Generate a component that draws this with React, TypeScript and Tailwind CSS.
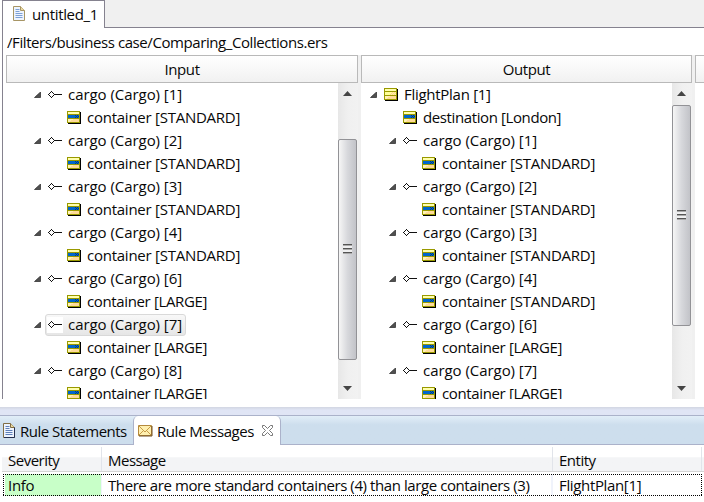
import type { ReactNode } from "react";

type Kind = "entity" | "association" | "attribute";
type Node = { kind: Kind; label: string; size: string; depth: number; selected?: boolean };

const cargo = (n: number, depth: number, selected = false): Node => ({
  kind: "association", label: `cargo (Cargo) [${n}]`, size: "tracking-[-0.05px]", depth, selected,
});
const container = (type: string, depth: number): Node => ({
  kind: "attribute",
  label: `container [${type}]`,
  size: type === "LARGE" ? "tracking-[-0.36px]" : "tracking-[-0.25px]",
  depth,
});

const inputNodes: Node[] = [
  cargo(1, 1), container("STANDARD", 2),
  cargo(2, 1), container("STANDARD", 2),
  cargo(3, 1), container("STANDARD", 2),
  cargo(4, 1), container("STANDARD", 2),
  cargo(6, 1), container("LARGE", 2),
  cargo(7, 1, true), container("LARGE", 2),
  cargo(8, 1), container("LARGE", 2),
];

const outputNodes: Node[] = [
  { kind: "entity", label: "FlightPlan [1]", size: "tracking-[-0.28px]", depth: 0 },
  { kind: "attribute", label: "destination [London]", size: "tracking-[-0.39px]", depth: 1 },
  cargo(1, 1), container("STANDARD", 2),
  cargo(2, 1), container("STANDARD", 2),
  cargo(3, 1), container("STANDARD", 2),
  cargo(4, 1), container("STANDARD", 2),
  cargo(6, 1), container("LARGE", 2),
  cargo(7, 1), container("LARGE", 2),
];

function NodeIcon({ kind }: { kind: Kind }) {
  if (kind === "association") {
    return (
      <svg width="16" height="13" viewBox="0 0 16 13" shapeRendering="crispEdges" className="shrink-0">
        <path d="M4 3h1v1h-1zM3 4h1v1h-1zM5 4h1v1h-1zM2 5h1v1h-1zM6 5h1v1h-1zM1 6h1v1h-1zM7 6h8v1h-8zM2 7h1v1h-1zM6 7h1v1h-1zM3 8h1v1h-1zM5 8h1v1h-1zM4 9h1v1h-1z" fill="#111" />
      </svg>
    );
  }
  const entity = kind === "entity";
  return (
    <svg width="16" height="13" viewBox="0 0 16 13" shapeRendering="crispEdges" className="shrink-0">
      <path d="M2 1h13v12H2z" fill="#000" />
      <path d="M1 0h13v12H1z" fill="#999900" />
      <path d="M2 1h11v2H2z" fill="#ffffad" />
      <path d="M2 4h11v3H2z" fill={entity ? "#ffff99" : "#0066cc"} />
      <path d="M2 8h11v3H2z" fill="#ffdb98" />
      <path d="M2 8h5v1H2zM2 9h3v1H2zM2 10h2v1H2z" fill="#fff3b5" />
      {entity ? (
        <path d="M9 4h1v1h-1zM11 4h1v1h-1zM8 5h1v1h-1zM10 5h1v1h-1zM12 5h1v1h-1zM7 6h1v1h-1zM9 6h1v1h-1zM11 6h1v1h-1z" fill="#ffcc99" />
      ) : (
        <path d="M9 4h1v1h-1zM11 4h1v1h-1zM10 5h1v1h-1zM12 5h1v1h-1zM9 6h1v1h-1zM11 6h1v1h-1z" fill="#003d82" />
      )}
    </svg>
  );
}

function TreeRow({ node }: { node: Node }) {
  const indent = node.depth === 0 ? "pl-[9px]" : node.depth === 1 ? "pl-[28px]" : "pl-[47px]";
  return (
    <div className={`flex h-[23px] shrink-0 items-center ${indent}`}>
      <span className="flex w-[11px] shrink-0">
        {node.kind !== "attribute" && (
          <svg width="7" height="6" viewBox="0 0 7 6">
            <path d="M6.5 0V5.5H0.5Z" fill="#505050" stroke="#262626" strokeWidth=".7" />
          </svg>
        )}
      </span>
      <div
        className={`flex h-[22px] items-center border pl-px ${
          node.selected
            ? "w-[141px] rounded-[3px] border-[#d9d9d9] bg-linear-to-b from-[#f8f8f8] to-[#e6e6e6]"
            : "border-transparent"
        }`}
      >
        <span className={`flex h-[16px] items-center ${node.selected ? "bg-white" : ""}`}>
          <NodeIcon kind={node.kind} />
        </span>
        <span className={`ml-[5px] pb-[2px] whitespace-nowrap ${node.size}`}>{node.label}</span>
      </div>
    </div>
  );
}

function Arrow({ down = false }: { down?: boolean }) {
  return (
    <svg width="9" height="5" viewBox="0 0 9 5" className={`ml-[5px] block ${down ? "rotate-180" : ""}`}>
      <path d="M4.5 0L9 5H0Z" fill="#454545" />
    </svg>
  );
}

function Scrollbar({ before, thumb }: { before: string; thumb: string }) {
  return (
    <div className="flex w-[20px] shrink-0 flex-col bg-linear-to-r from-[#e7e7e7] via-[#f0f0f0] to-[#f2f2f2]">
      <div className={`${before} shrink-0 pt-[8px]`}><Arrow /></div>
      <div className={`${thumb} flex w-[19px] shrink-0 items-center justify-center rounded-[2px] border border-[#929296] bg-linear-to-r from-[#f6f6f6] from-0% via-[#d7d8dc] via-50% to-[#c2c3c8]`}>
        <div className="mt-[-2px] flex flex-col gap-[2px] bg-[#efeff0]">
          <i className="block h-[2px] w-[9px] border-t border-[#555] bg-[#aaa]" />
          <i className="block h-[2px] w-[9px] border-t border-[#555] bg-[#aaa]" />
          <i className="block h-[2px] w-[9px] border-t border-[#555] bg-[#aaa]" />
        </div>
      </div>
      <div className="flex flex-1 flex-col justify-end pb-[8px]"><Arrow down /></div>
    </div>
  );
}

function Panel({ title, width, children, scroll }: { title: string; width: string; children?: ReactNode; scroll?: ReactNode }) {
  return (
    <section className={`${width} flex shrink-0 flex-col`}>
      <header className="flex h-[28px] shrink-0 items-center justify-center border border-[#b9b9b9] bg-linear-to-b from-white to-[#f1f1f1] tracking-[-0.38px]">
        {title}
      </header>
      <div className="flex min-h-0 flex-1 overflow-hidden">
        <div className="min-w-0 flex-1">{children}</div>
        {scroll}
      </div>
    </section>
  );
}

function DocIcon({ dark = false }: { dark?: boolean }) {
  return (
    <svg width="12" height="15" viewBox="0 0 12 15" className="shrink-0">
      <path d="M.5.5h7l4 4v10H.5z" fill="#edf4ff" stroke={dark ? "#806d45" : "#a79565"} />
      <path d="M7.5.5v4h4" fill="#ead9a2" stroke={dark ? "#806d45" : "#a79565"} />
      <path d="M2.5 3.5h4M2.5 5.5h4M2.5 7.5h7M2.5 9.5h7M2.5 11.5h7" stroke={dark ? "#5e7fb8" : "#7da0d6"} />
      {dark && <path d="M11.5 4.5v10H1" fill="none" stroke="#26304f" />}
    </svg>
  );
}

export default function App() {
  return (
    <main className="flex h-[502px] w-[704px] flex-col overflow-hidden bg-white font-['Open_Sans','Noto_Sans',sans-serif] text-[15px] leading-[20px] text-[#080808]">
      <div className="ml-[2px] flex h-[28px] shrink-0">
        <div className="flex w-[103px] items-center border-x border-t border-[#85828f] bg-white pl-[10px]">
          <span className="flex pb-[3px]"><DocIcon /></span>
          <span className="ml-[7px] pb-[2px] whitespace-nowrap tracking-[-0.35px]">untitled_1</span>
        </div>
        <div className="flex-1 border-b border-[#85828f] bg-[#f0f0f0]" />
      </div>

      <div className="ml-[2px] flex h-[371px] shrink-0 flex-col border-l border-[#85828f] pl-[3px]">
        <div className="h-[27px] shrink-0 pt-[4px] pl-px whitespace-nowrap tracking-[-0.42px]">
          /Filters/business case/Comparing_Collections.ers
        </div>
        <div className="flex min-h-0 flex-1">
          <Panel title="Input" width="w-[352px]" scroll={<Scrollbar before="h-[56px]" thumb="h-[221px]" />}>
            {inputNodes.map((node, index) => <TreeRow key={index} node={node} />)}
          </Panel>
          <div className="w-[3px] shrink-0 bg-[#f0f0f0]" />
          <Panel title="Output" width="w-[331px]" scroll={<Scrollbar before="h-[22px]" thumb="h-[221px]" />}>
            {outputNodes.map((node, index) => <TreeRow key={index} node={node} />)}
          </Panel>
          <div className="w-[3px] shrink-0 bg-[#f0f0f0]" />
          <Panel title="" width="w-[20px]" />
        </div>
      </div>

      <div className="mt-[8px] h-[8px] shrink-0 bg-linear-to-b from-[#d2d6e2] to-[#e0e5f5] to-40%" />

      <nav className="flex h-[30px] shrink-0 border-t border-[#abb2ca] bg-linear-to-b from-[#e2eef8] to-[#cddeed] to-30%">
        <div className="flex w-[133px] shrink-0 items-center border-b border-[#abb2ca] pt-[2px] pl-[3px]">
          <span className="flex pb-[2px]"><DocIcon dark /></span>
          <span className="ml-[5px] whitespace-nowrap tracking-[-0.5px]">Rule Statements</span>
        </div>
        <div className="flex w-[148px] shrink-0 items-center rounded-t-[5px] border-x border-[#abb2ca] bg-white pt-px pl-[4px]">
          <svg width="15" height="12" viewBox="0 0 15 12" className="shrink-0">
            <path d="M.5.5h13v10H.5z" fill="#fff0b0" stroke="#b58a3d" />
            <path d="M1 1l6 6 6-6M1 10l4-4M13 10L9 6" fill="none" stroke="#c79b48" />
            <path d="M1 11h13V1" fill="none" stroke="#705126" />
          </svg>
          <span className="ml-[4px] w-[98px] whitespace-nowrap tracking-[-0.45px]">Rule Messages</span>
          <svg width="11" height="11" viewBox="0 0 11 11" className="mt-[-2px] ml-[7px] shrink-0">
            <path d="M.5.5h2l3 3 3-3h2v2l-3 3 3 3v2h-2l-3-3-3 3h-2v-2l3-3-3-3z" fill="white" stroke="#696969" strokeWidth=".9" />
          </svg>
        </div>
        <div className="flex-1 border-b border-[#abb2ca]" />
      </nav>

      <div className="mt-[2px] ml-[2px] flex h-[25px] shrink-0 items-center border-b border-[#d5d5d5] bg-linear-to-b from-white from-40% to-[#f3f4f6] to-45% tracking-[-0.5px]">
        <div className="flex h-full w-[100px] items-center border-r border-[#e1e4ea] pt-px pl-[6px]">Severity</div>
        <div className="flex h-full w-[451px] items-center border-r border-[#e1e4ea] pt-px pl-[6px]">Message</div>
        <div className="flex h-full w-[149px] items-center border-r border-[#e1e4ea] pt-px pl-[6px]">Entity</div>
      </div>
      <div className="flex h-[30px] shrink-0 pl-[3px]">
        <div className="relative flex w-[699px] pt-[2px]">
          <div className="flex h-[22px] w-[99px] items-center border-r border-[#f0f3fb] pl-[2px]">
            <div className="flex h-full flex-1 items-center bg-[#c8ffc8] pb-px pl-[3px] tracking-[-0.3px]">Info</div>
          </div>
          <div className="flex h-[22px] w-[451px] items-center border-r-2 border-[#f0f3fb] pb-px pl-[6px] whitespace-nowrap tracking-[-0.415px]">
            There are more standard containers (4) than large containers (3)
          </div>
          <div className="flex h-[22px] items-center pb-px pl-[6px] tracking-[-0.35px]">FlightPlan[1]</div>
          <svg width="699" height="22" className="absolute top-[2px] left-0" shapeRendering="crispEdges">
            <path d="M0 .5H699M0 21.5H699M.5 0V22M698.5 0V22" fill="none" stroke="#000" strokeDasharray="1 1" />
          </svg>
        </div>
      </div>
    </main>
  );
}
